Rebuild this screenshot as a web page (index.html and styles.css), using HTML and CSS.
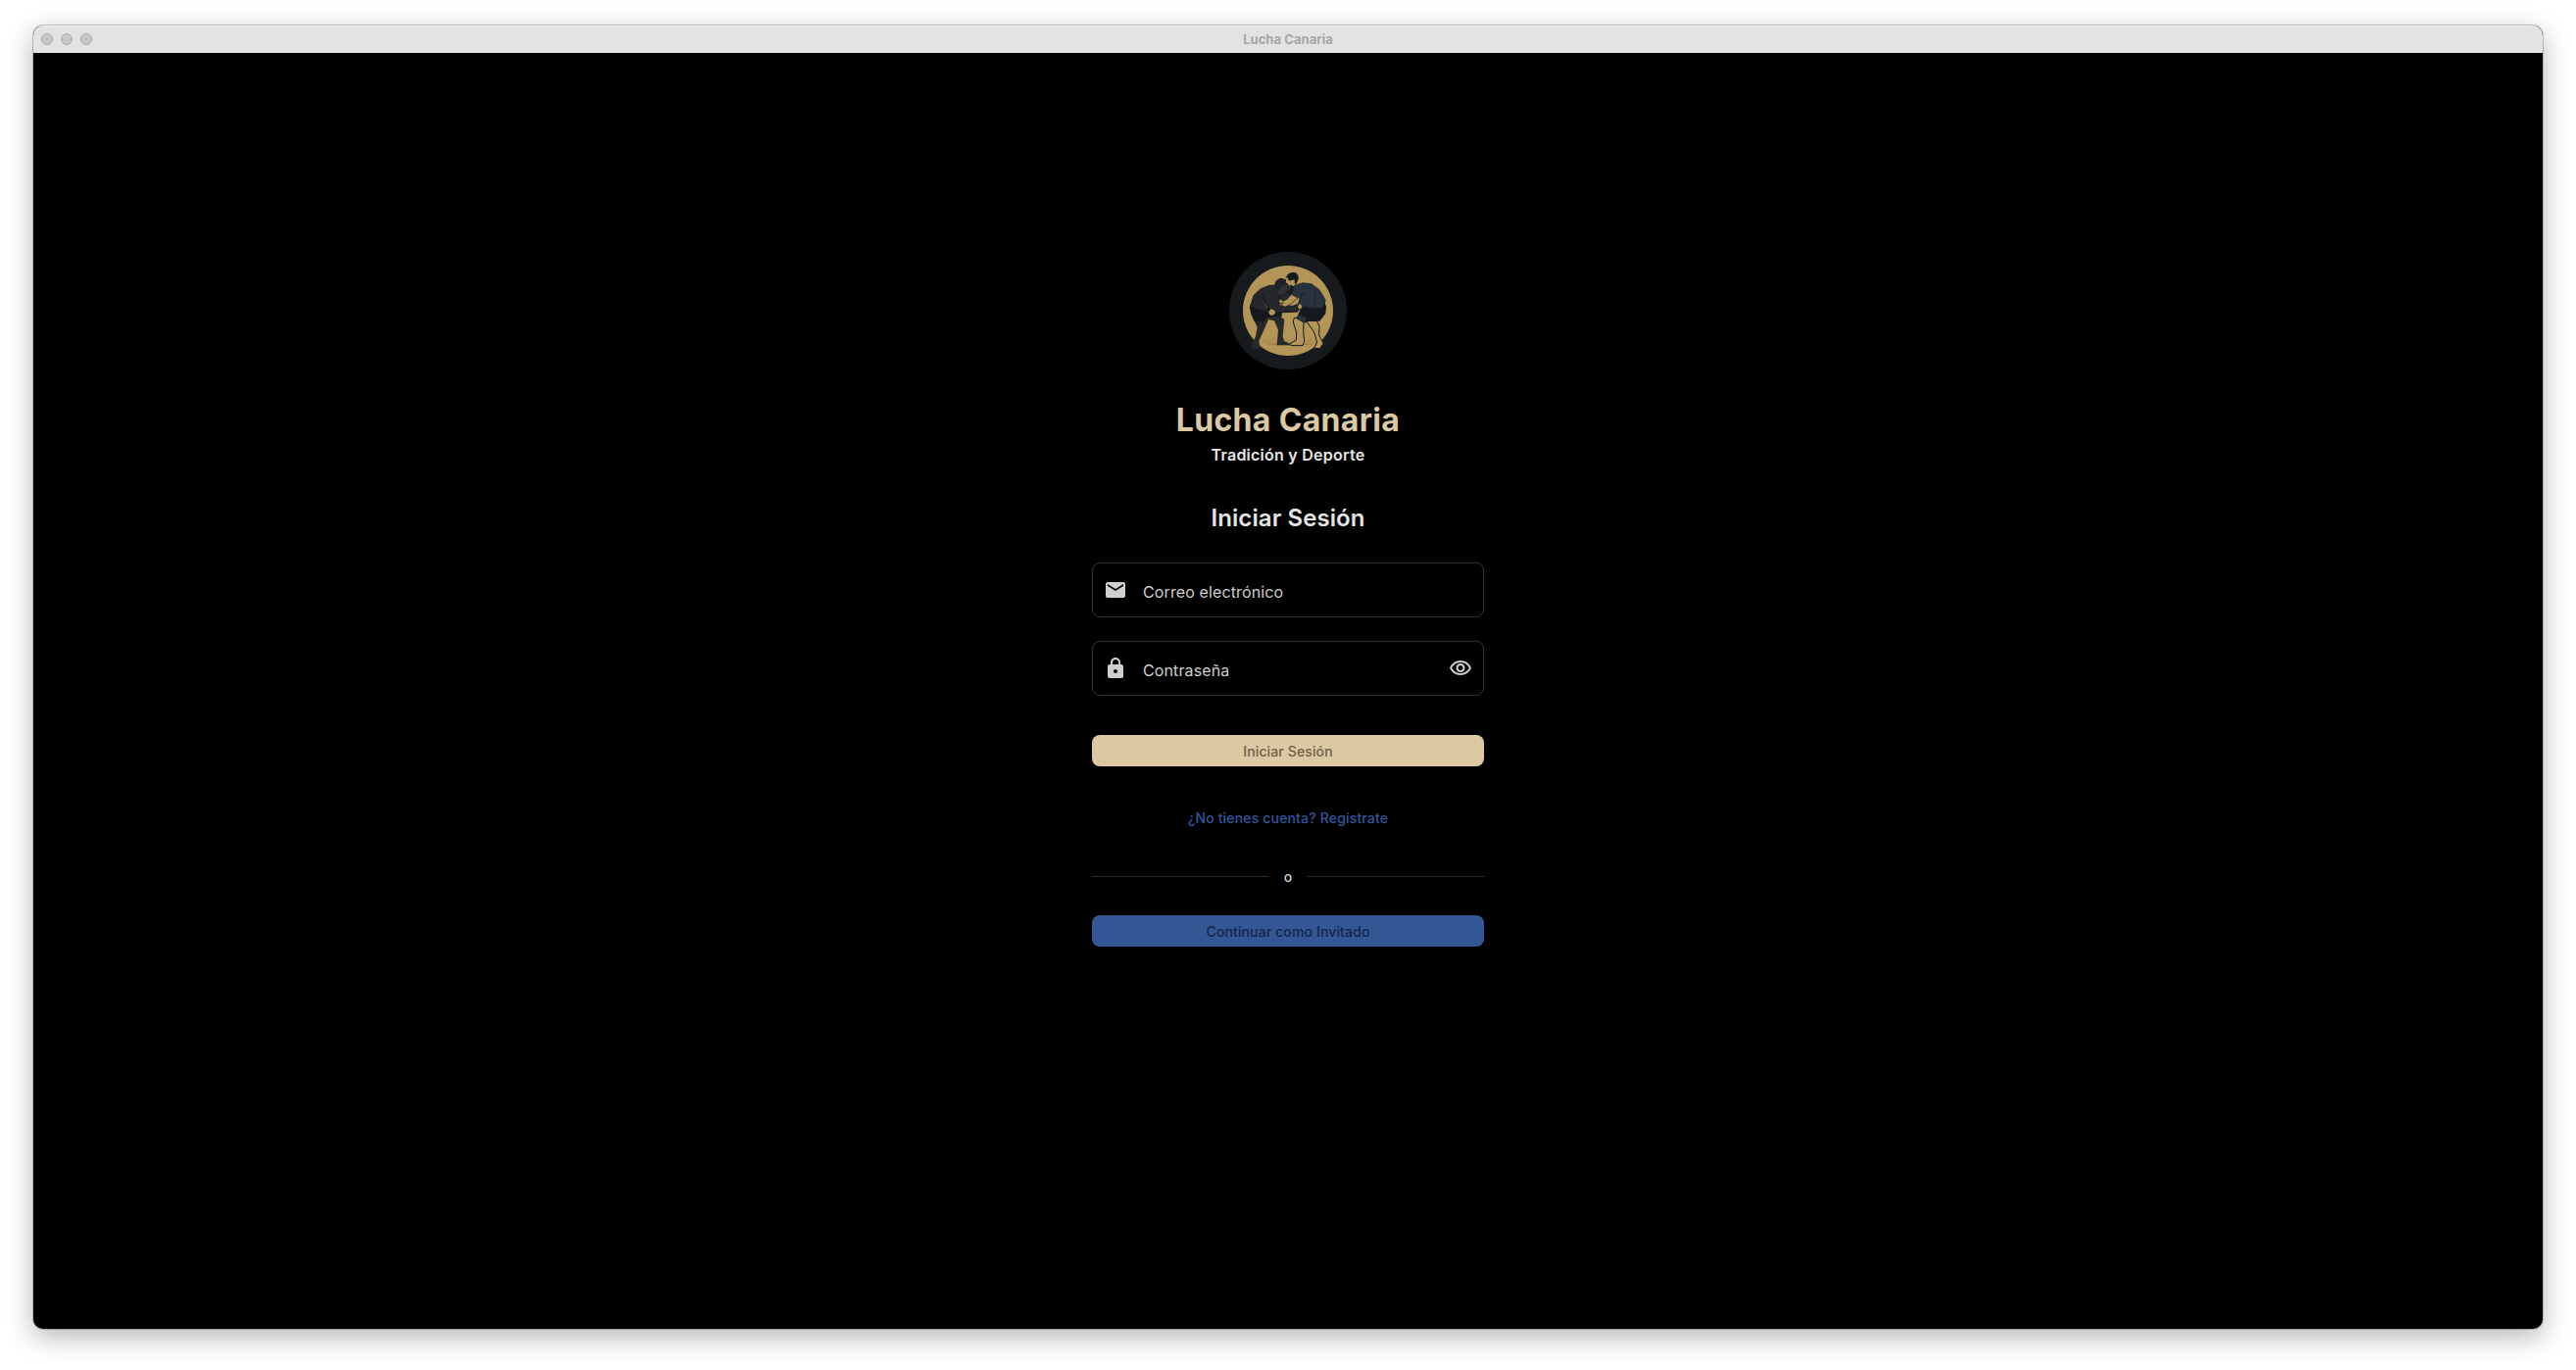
FILE: index.html
```html
<!DOCTYPE html>
<html lang="es">
<head>
<meta charset="utf-8">
<title>Lucha Canaria</title>
<link rel="stylesheet" href="styles.css">
</head>
<body>
<main class="window">
  <header class="titlebar">
    <div class="controls"><i></i><i></i><i></i></div>
    <span class="window-title">Lucha Canaria</span>
  </header>
  <section class="login">
    <svg class="logo" viewBox="30 33 360 360" aria-hidden="true">
      <circle cx="210" cy="213" r="180" fill="#161a1c"/>
      <circle cx="210" cy="213" r="138" fill="#b39657"/>
      <path d="M122 302L170 298L300 300L312 308L300 318L230 320L150 318Z" fill="#ac8f50"/>
      <path d="M146 316L180 312L290 316L230 321Z" fill="#96793f"/>
      <!-- left wrestler -->
      <path d="M97 190L192 216L191 230L176 244L150 233L136 250L107 246L97 224L92 202Z" fill="#14181b"/>
      <path d="M107 244L137 250L145 237L160 232L186 230L199 241L194 292L198 306L214 313L213 319H176L180 272L168 244L150 240L139 266L121 306L125 326L112 331L97 325L98 316L111 292L116 264Z" fill="#26282a"/>
      <path d="M93 199L104 166L126 145L153 134H170L175 121L188 113L204 118L214 138L226 148L222 166L204 180L193 186L184 196L225 197L243 190L250 205L240 216L180 219L166 211L150 207L140 193L150 215L126 211Z" fill="#25272a"/>
      <path d="M170 150C164 132 175 114 190 115C203 116 211 127 209 143L203 158L190 165L179 163Z" fill="#303132"/>
      <path d="M170 150C164 132 175 114 190 115C202 116 209 127 205 135L193 137L185 148L177 154Z" fill="#202326"/>
      <path d="M130 162L143 190L153 208M173 155L184 168L190 187M180 219L240 216" fill="none" stroke="#14181b" stroke-width="3"/>
      <path d="M151 216L158 208L170 213L171 222L161 228L153 224Z" fill="#b39657"/>
      <!-- right wrestler -->
      <path d="M228 236L243 234L258 251L257 278L260 306L255 320H222L214 316L235 303L236 279L226 249Z" fill="#b39657" stroke="#15191c" stroke-width="3"/>
      <path d="M266 244L298 244L306 261L305 288L318 313L308 329L290 328L299 309L290 279Z" fill="#b39657" stroke="#15191c" stroke-width="3"/>
      <path d="M246 192L307 202L319 180L327 201L325 222L307 245L269 246L263 251L236 238L248 208Z" fill="#14191d"/>
      <path d="M236 231L248 227L267 235L262 250L240 241Z" fill="#29313c"/>
      <path d="M225 137L256 128L282 131L306 149L325 181L316 205L299 207L258 202L242 190L246 174L222 164L226 151Z" fill="#28313d" stroke="#14191d" stroke-width="2"/>
      <path d="M204 116L230 116L233 132L226 138L217 135L204 127Z" fill="#b39657"/>
      <path d="M203 117C205 100 219 93 232 97C242 101 245 113 240 121L235 132L230 129V118L213 122L208 110Z" fill="#14191d"/>
      <path d="M215 133L228 139L222 162L207 158L218 145Z" fill="#15191c"/>
      <path d="M221 163L240 175L216 194L202 201L190 198L196 188L186 192L181 182L188 178L194 184L208 178Z" fill="#b39657" stroke="#15191c" stroke-width="2"/>
      <path d="M243 193L250 194L254 203L246 208L240 203Z" fill="#b39657"/>
      <path d="M246 177L259 158M248 166L268 154M295 150L289 203" fill="none" stroke="#1b242f" stroke-width="3"/>
    </svg>
    <h1>Lucha Canaria</h1>
    <p class="tagline">Tradición y Deporte</p>
    <h2>Iniciar Sesión</h2>
    <form class="form">
      <div class="field">
        <svg class="icon" viewBox="0 0 24 24"><path d="M20 4H4c-1.100 0-1.990.900-1.990 2L2 18c0 1.100.900 2 2 2h16c1.100 0 2-.900 2-2V6c0-1.100-.900-2-2-2zm0 4l-8 5-8-5V6l8 5 8-5v2z"/></svg>
        <span class="label">Correo electrónico</span>
      </div>
      <div class="field">
        <svg class="icon" viewBox="0 0 24 24"><path d="M18 8h-1V6c0-2.760-2.240-5-5-5S7 3.240 7 6v2H6c-1.100 0-2 .900-2 2v10c0 1.100.900 2 2 2h12c1.100 0 2-.900 2-2V10c0-1.100-.900-2-2-2zm-6 9c-1.100 0-2-.900-2-2s.900-2 2-2 2 .900 2 2-.900 2-2 2zM9 8V6c0-1.710 1.390-3.100 3.100-3.100s3.100 1.390 3.100 3.100v2H9z"/></svg>
        <span class="label">Contraseña</span>
        <svg class="icon" viewBox="0 0 24 24"><path d="M12 6c3.790 0 7.170 2.130 8.820 5.500C19.170 14.870 15.790 17 12 17s-7.170-2.130-8.820-5.500C4.830 8.130 8.210 6 12 6m0-2C7 4 2.730 7.110 1 11.500 2.730 15.890 7 19 12 19s9.270-3.110 11-7.500C21.270 7.110 17 4 12 4zm0 5c1.380 0 2.500 1.120 2.500 2.500S13.380 14 12 14s-2.500-1.120-2.500-2.500S10.620 9 12 9m0-2c-2.480 0-4.500 2.020-4.500 4.500S9.520 16 12 16s4.500-2.020 4.500-4.500S14.480 7 12 7z"/></svg>
      </div>
      <button class="button primary" type="button"><span>Iniciar Sesión</span></button>
      <a class="register"><span>¿No tienes cuenta? Regístrate</span></a>
      <div class="divider"><span>o</span></div>
      <button class="button guest" type="button"><span>Continuar como Invitado</span></button>
    </form>
  </section>
</main>
</body>
</html>
```
FILE: styles.css
```css
* { box-sizing: border-box; }
body {
  margin: 0;
  height: 1398px;
  padding: 26px 34px 42px;
  background: #fff;
  font-family: Inter, "Liberation Sans", sans-serif;
  overflow: hidden;
}
.window {
  height: 1330px;
  border-radius: 10px;
  background: #000;
  overflow: hidden;
  box-shadow: 0 0 0 1px rgba(0, 0, 0, .2), 0 8px 28px rgba(0, 0, 0, .3);
}
.titlebar {
  height: 28px;
  padding-bottom: 2px;
  display: grid;
  grid-template-columns: 1fr auto 1fr;
  align-items: center;
  background: #e3e3e3;
  border-top: 1px solid #efefef;
}
.controls { display: flex; gap: 8px; padding-left: 8px; }
.controls i {
  width: 12px;
  height: 12px;
  border: 1px solid #acacac;
  border-radius: 50%;
  background: #c8c8c8;
}
.window-title { font-size: 13px; line-height: 16px; font-weight: 700; letter-spacing: .05px; color: #a6a6a6; }
.login {
  width: 400px;
  margin: 0 auto;
  padding-top: 203px;
  display: flex;
  flex-direction: column;
  align-items: center;
}
.logo { width: 120px; height: 120px; }
h1, h2, p { margin: 0; white-space: nowrap; }
h1 { margin-top: 32px; font-size: 32px; line-height: 40px; font-weight: 700; letter-spacing: .33px; color: #dbc9a3; }
.tagline { margin-top: 3px; font-size: 16px; line-height: 24px; font-weight: 600; letter-spacing: .25px; color: #e6e6e6; }
h2 { margin-top: 37px; font-size: 24px; line-height: 32px; font-weight: 600; letter-spacing: .1px; color: #e4e4e4; }
.form { width: 100%; margin-top: 29px; display: flex; flex-direction: column; }
.field {
  height: 56px;
  margin-bottom: 24px;
  padding: 0 11px;
  display: flex;
  align-items: center;
  border: 1px solid #333;
  border-radius: 8px;
}
.icon { width: 24px; height: 24px; fill: #cfcfcf; }
.label { flex: 1; margin-left: 16px; padding-top: 4px; font-size: 16px; line-height: 24px; letter-spacing: .12px; color: #cecece; }
.button {
  height: 32px;
  padding: 1px 0 0;
  border: 0;
  border-radius: 8px;
  font: 500 14px/20px Inter, "Liberation Sans", sans-serif;
  letter-spacing: .13px;
}
.primary { margin-top: 16px; background: #dbc9a3; color: #6f6047; }
.guest { margin-top: 30px; background: #345694; color: #11254b; }
.register { margin-top: 43px; font-size: 14px; line-height: 20px; font-weight: 500; letter-spacing: .17px; color: #31569c; text-align: center; }
.divider { margin-top: 39px; height: 20px; display: flex; align-items: center; font-size: 14px; line-height: 20px; font-weight: 500; color: #d2d2d2; }
.divider::before, .divider::after { content: ""; flex: 1; height: 1px; background: #2e2e2e; }
.divider span { padding: 1px 16px 0; }
```
